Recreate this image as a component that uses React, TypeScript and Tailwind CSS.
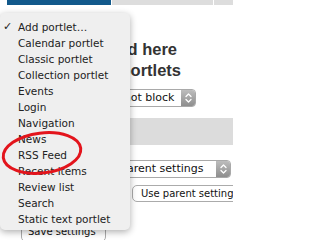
import React from "react";

const items = [
  "Add portlet…",
  "Calendar portlet",
  "Classic portlet",
  "Collection portlet",
  "Events",
  "Login",
  "Navigation",
  "News",
  "RSS Feed",
  "Recent items",
  "Review list",
  "Search",
  "Static text portlet",
];

function Chevrons() {
  return (
    <svg width="9" height="12" viewBox="0 0 9 12" fill="none">
      <path d="M2 4.5 L4.5 2 L7 4.5" stroke="white" strokeWidth="1.3" strokeLinecap="round" strokeLinejoin="round" />
      <path d="M2 7.5 L4.5 10 L7 7.5" stroke="white" strokeWidth="1.3" strokeLinecap="round" strokeLinejoin="round" />
    </svg>
  );
}

function FakeSelect({ label, className }: { label: string; className: string }) {
  return (
    <div className={`flex h-[18px] overflow-hidden rounded-[4px] border border-[#a9a9a9] bg-white ${className}`}>
      <span className="flex-1 whitespace-nowrap pl-[6px] text-[11px] leading-[16px] text-[#111]">{label}</span>
      <span className="flex w-[14px] items-center justify-center bg-gradient-to-b from-[#bdbdbd] to-[#8e8e8e]">
        <Chevrons />
      </span>
    </div>
  );
}

export default function App() {
  return (
    <div className="relative flex h-[240px] w-[233px] flex-col overflow-hidden bg-white font-['DejaVu_Sans',sans-serif]">
      {/* top bar */}
      <div className="flex h-[5px] shrink-0">
        <div className="w-[7px] bg-white" />
        <div className="w-[104px] bg-[#12598b]" />
        <div className="w-[1px] bg-white" />
        <div className="w-[101px] bg-[#dddddd]" />
        <div className="w-[1px] bg-white" />
        <div className="flex-1 bg-[#dddddd]" />
      </div>

      {/* heading */}
      <div className="mt-[34px] flex shrink-0 flex-col whitespace-nowrap font-['Liberation_Sans',Arial,sans-serif] text-[16.5px] font-bold leading-[21px] text-[#333]">
        <div className="w-[177px] text-right">Portlets assigned here</div>
        <div className="w-[181px] text-right">Block portlets</div>
      </div>

      <FakeSelect label="Do not block" className="ml-[98px] mt-[8px] w-[98px] shrink-0" />

      <div className="mt-[11px] h-[27px] w-full shrink-0 bg-[#dcdcdc]" />

      <FakeSelect label="Use parent settings" className="ml-[89px] mt-[15px] w-[142px] shrink-0" />

      <div className="ml-[132px] mt-[7px] h-[17px] w-[120px] shrink-0 whitespace-nowrap rounded-[5px] border border-[#ababab] bg-white pl-[8px] text-[10px] leading-[15px] text-[#111]">
        Use parent settings
      </div>

      <div className="ml-[21px] mt-[20px] h-[20px] w-[85px] shrink-0 whitespace-nowrap rounded-[5px] border border-[#ababab] bg-white pl-[6px] text-[10px] leading-[18px] text-[#111]">
        Save settings
      </div>

      {/* dropdown menu */}
      <div className="absolute left-0 top-[13px] h-[217px] w-[130px] rounded-[5px] bg-[#efefef] pt-[6px] shadow-[0_2px_7px_rgba(0,0,0,0.32)]">
        {items.map((it, i) => (
          <div key={it} className="flex h-[16px] items-center whitespace-nowrap text-[10.5px] leading-[16px] text-[#222]">
            <span className="w-[18px] pl-[3px] text-[11px] font-bold text-[#222]">{i === 0 ? "✓" : ""}</span>
            <span>{it}</span>
          </div>
        ))}
      </div>

      {/* red annotation */}
      <svg className="pointer-events-none absolute left-0 top-0" width="233" height="240" viewBox="0 0 233 240">
        <ellipse cx="42" cy="153" rx="39" ry="20" fill="none" stroke="#e3141c" strokeWidth="3" transform="rotate(-7 42 153)" />
      </svg>
    </div>
  );
}
